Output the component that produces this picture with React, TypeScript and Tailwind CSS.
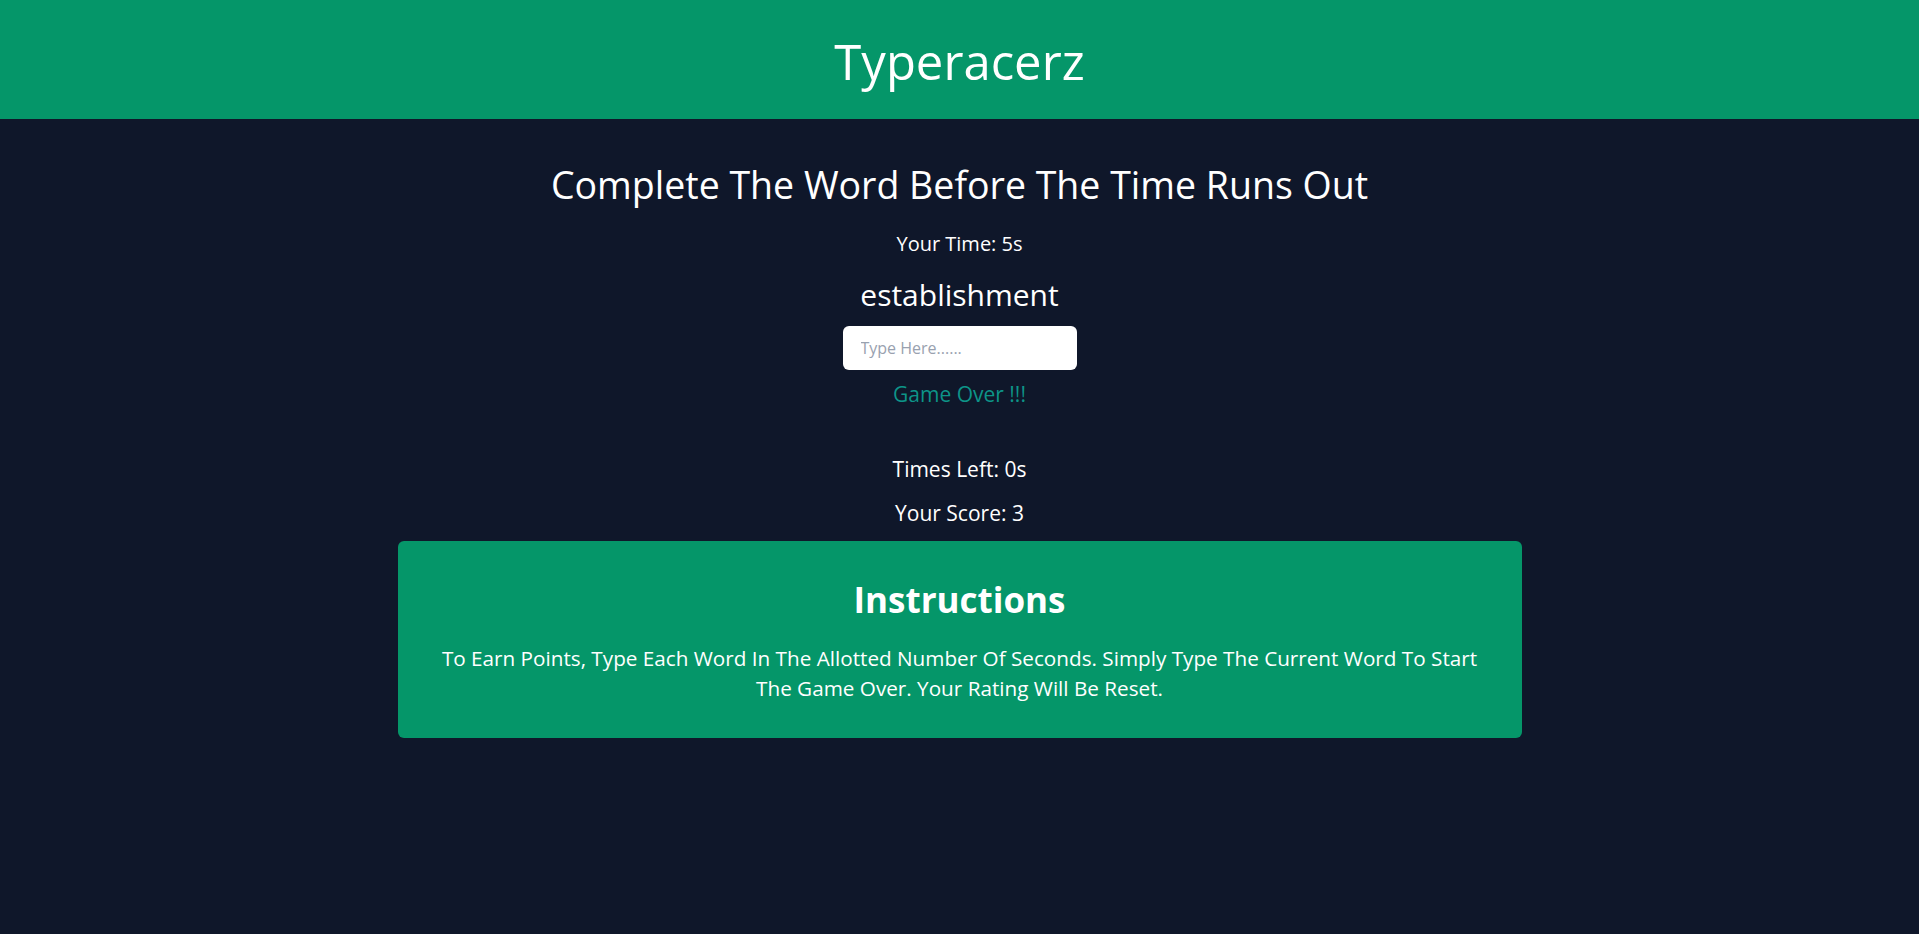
import { useState } from 'react';

const font = { fontFamily: '"Open Sans", "Noto Sans", sans-serif' };

export default function App() {
  const [value, setValue] = useState('');
  const word = 'establishment';

  return (
    <div className="min-h-screen bg-[#0f172a] text-white" style={font}>
      <header className="h-[119px] bg-[#059669] flex items-center justify-center pt-[3px]">
        <h1 className="text-[49px] leading-none">Typeracerz</h1>
      </header>

      <main className="flex flex-col items-center">
        <h2 className="mt-[47px] text-[37.5px] leading-none">Complete The Word Before The Time Runs Out</h2>
        <p className="mt-[30px] text-[20px] leading-none">Your Time: 5s</p>
        <p className="mt-[26px] text-[30px] leading-none">{word}</p>
        <input
          autoFocus
          value={value}
          onChange={(e) => setValue(e.target.value)}
          placeholder="Type Here......"
          className="mt-[16px] w-[234px] h-[44px] rounded-md bg-white pl-[18px] text-[16px] text-gray-900 placeholder:text-gray-400 outline-none"
        />
        <p className="mt-[14px] text-[21px] leading-none text-[#0d9488]">Game Over !!!</p>
        <p className="mt-[54px] text-[21px] leading-none">Times Left: 0s</p>
        <p className="mt-[23px] text-[21px] leading-none">Your Score: 3</p>

        <section className="mt-[17px] w-[1124px] rounded-md bg-[#059669] px-[40px] pt-[41px] pb-[35px] text-center">
          <h3 className="text-[35px] font-bold leading-none">Instructions</h3>
          <p className="mt-[26px] text-[20.7px] leading-[30px]">
            To Earn Points, Type Each Word In The Allotted Number Of Seconds. Simply Type The Current Word To Start
            The Game Over. Your Rating Will Be Reset.
          </p>
        </section>
      </main>
    </div>
  );
}
